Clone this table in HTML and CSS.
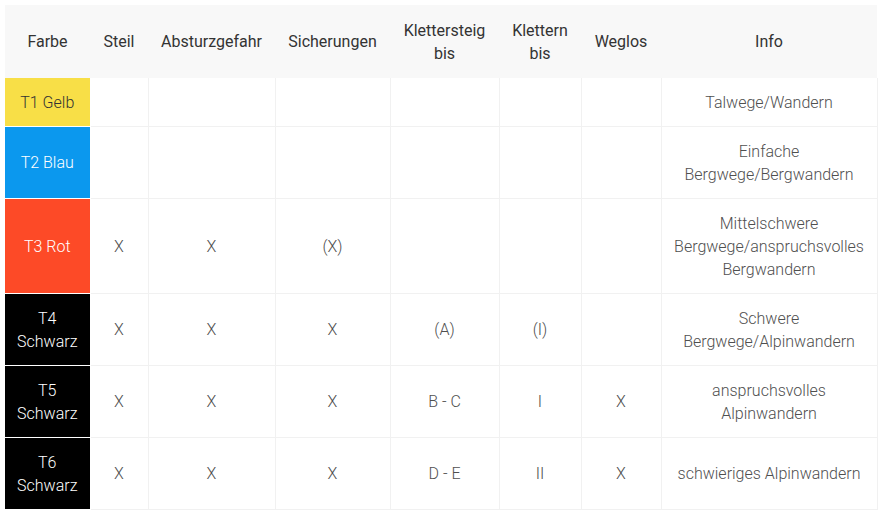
FILE: index.html
```html
<!DOCTYPE html>
<html lang="de">
<head>
<meta charset="utf-8">
<title>Schwierigkeitsskala</title>
<link rel="stylesheet" href="styles.css">
</head>
<body>
<table class="scale">
  <colgroup>
    <col class="c-farbe">
    <col class="c-steil">
    <col class="c-absturz">
    <col class="c-sich">
    <col class="c-ks">
    <col class="c-kl">
    <col class="c-weg">
    <col class="c-info">
  </colgroup>
  <thead>
    <tr>
      <th>Farbe</th>
      <th>Steil</th>
      <th>Absturzgefahr</th>
      <th>Sicherungen</th>
      <th>Klettersteig bis</th>
      <th>Klettern bis</th>
      <th>Weglos</th>
      <th>Info</th>
    </tr>
  </thead>
  <tbody>
    <tr class="r1">
      <td class="grade yellow">T1 Gelb</td>
      <td></td><td></td><td></td><td></td><td></td><td></td>
      <td>Talwege/Wandern</td>
    </tr>
    <tr>
      <td class="grade blue">T2 Blau</td>
      <td></td><td></td><td></td><td></td><td></td><td></td>
      <td>Einfache Bergwege/Bergwandern</td>
    </tr>
    <tr>
      <td class="grade red">T3 Rot</td>
      <td>X</td><td>X</td><td>(X)</td><td></td><td></td><td></td>
      <td>Mittelschwere Bergwege/anspruchsvolles Bergwandern</td>
    </tr>
    <tr>
      <td class="grade black">T4 Schwarz</td>
      <td>X</td><td>X</td><td>X</td><td>(A)</td><td>(I)</td><td></td>
      <td>Schwere Bergwege/Alpinwandern</td>
    </tr>
    <tr>
      <td class="grade black">T5 Schwarz</td>
      <td>X</td><td>X</td><td>X</td><td>B - C</td><td>I</td><td>X</td>
      <td>anspruchsvolles Alpinwandern</td>
    </tr>
    <tr>
      <td class="grade black">T6 Schwarz</td>
      <td>X</td><td>X</td><td>X</td><td>D - E</td><td>II</td><td>X</td>
      <td>schwieriges Alpinwandern</td>
    </tr>
  </tbody>
</table>
</body>
</html>
```

FILE: styles.css
```css
html, body {
  margin: 0;
  background: #ffffff;
}

body {
  padding: 5px;
  font-family: Roboto, "Liberation Sans", Arial, sans-serif;
  font-size: 16px;
  line-height: 23px;
}

.scale {
  width: 872px;
  table-layout: fixed;
  border-collapse: collapse;
  text-align: center;
}

.c-farbe { width: 85px; }
.c-steil { width: 58px; }
.c-absturz { width: 127px; }
.c-sich { width: 115px; }
.c-ks { width: 109px; }
.c-kl { width: 82px; }
.c-weg { width: 80px; }
.c-info { width: 216px; }

.scale th {
  background: #f8f8f8;
  color: #333333;
  font-weight: 400;
  padding: 13.5px 6px;
  height: 46px;
  vertical-align: middle;
}

.scale td {
  color: #4f4f4f;
  font-weight: 300;
  padding: 12.5px 6px;
  border: 1px solid #f1f1f1;
  vertical-align: middle;
}

.scale tbody tr:first-child td {
  border-top: none;
}

.scale td.grade {
  border-color: #ffffff;
  border-left: none;
  padding-left: 4px;
  padding-right: 4px;
}

.yellow { background: #f8df47; color: #333333 !important; }
.blue { background: #0b98ee; color: #ffffff !important; }
.red { background: #fd4a27; color: #ffffff !important; }
.black { background: #000000; color: #ffffff !important; }
```
